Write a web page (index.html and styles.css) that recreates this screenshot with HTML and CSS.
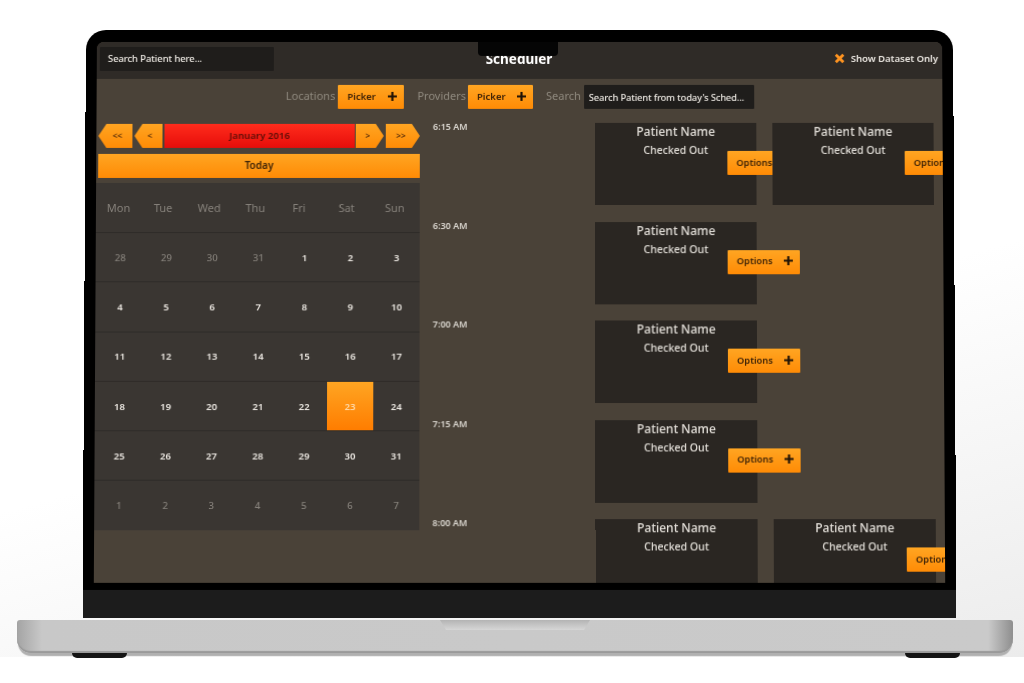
FILE: index.html
```html
<!DOCTYPE html>
<html lang="en">
<head>
<meta charset="utf-8">
<title>Scheduler</title>
<link rel="stylesheet" href="styles.css">
</head>
<body>
<div class="laptop">
  <div class="lid">
    <div class="screen">
      <div class="notch"></div>
      <header class="appbar">
        <div class="appbar-left"><div class="search-box search-main">Search Patient here...</div></div>
        <h1 class="title">Scheduler</h1>
        <div class="dataset">
          <svg class="x-icon" viewBox="0 0 12 12"><path d="M0.8 3 3 0.8 6 3.8 9 0.8 11.2 3 8.2 6 11.2 9 9 11.2 6 8.2 3 11.2 0.8 9 3.8 6Z"/></svg>
          <span>Show Dataset Only</span>
        </div>
      </header>
      <div class="toolbar">
        <span class="tool-label">Locations</span>
        <button class="btn btn-picker btn-loc">Picker <svg class="plus" viewBox="0 0 10 10"><path d="M3.8 0h2.4v3.8H10v2.4H6.2V10H3.8V6.2H0V3.8h3.8Z"/></svg></button>
        <span class="tool-label tool-prov">Providers</span>
        <button class="btn btn-picker btn-prov">Picker <svg class="plus" viewBox="0 0 10 10"><path d="M3.8 0h2.4v3.8H10v2.4H6.2V10H3.8V6.2H0V3.8h3.8Z"/></svg></button>
        <span class="tool-label tool-search">Search</span>
        <div class="search-box search-sched">Search Patient from today's Sched...</div>
      </div>
      <main class="main">
        <section class="cal-col">
          <div class="cal-nav">
            <div class="nav nav-ll">&lt;&lt;</div>
            <div class="nav nav-l">&lt;</div>
            <div class="nav nav-month">January 2016</div>
            <div class="nav nav-r">&gt;</div>
            <div class="nav nav-rr">&gt;&gt;</div>
          </div>
          <div class="today">Today</div>
          <div class="calendar">
            <div class="cal-head"><span>Mon</span><span>Tue</span><span>Wed</span><span>Thu</span><span>Fri</span><span>Sat</span><span>Sun</span></div>
            <div class="cal-row"><span class="off">28</span><span class="off">29</span><span class="off">30</span><span class="off">31</span><span>1</span><span>2</span><span>3</span></div>
            <div class="cal-row"><span>4</span><span>5</span><span>6</span><span>7</span><span>8</span><span>9</span><span>10</span></div>
            <div class="cal-row"><span>11</span><span>12</span><span>13</span><span>14</span><span>15</span><span>16</span><span>17</span></div>
            <div class="cal-row"><span>18</span><span>19</span><span>20</span><span>21</span><span>22</span><span class="sel">23</span><span>24</span></div>
            <div class="cal-row"><span>25</span><span>26</span><span>27</span><span>28</span><span>29</span><span>30</span><span>31</span></div>
            <div class="cal-row"><span class="off">1</span><span class="off">2</span><span class="off">3</span><span class="off">4</span><span class="off">5</span><span class="off">6</span><span class="off">7</span></div>
          </div>
        </section>
        <section class="sched">
          <div class="slot">
            <div class="time">6:15 AM</div>
            <div class="card"><div class="name">Patient Name</div><div class="status">Checked Out</div><button class="btn btn-opt">Options <svg class="plus" viewBox="0 0 10 10"><path d="M3.8 0h2.4v3.8H10v2.4H6.2V10H3.8V6.2H0V3.8h3.8Z"/></svg></button></div>
            <div class="card"><div class="name">Patient Name</div><div class="status">Checked Out</div><button class="btn btn-opt">Options <svg class="plus" viewBox="0 0 10 10"><path d="M3.8 0h2.4v3.8H10v2.4H6.2V10H3.8V6.2H0V3.8h3.8Z"/></svg></button></div>
          </div>
          <div class="slot">
            <div class="time">6:30 AM</div>
            <div class="card"><div class="name">Patient Name</div><div class="status">Checked Out</div><button class="btn btn-opt">Options <svg class="plus" viewBox="0 0 10 10"><path d="M3.8 0h2.4v3.8H10v2.4H6.2V10H3.8V6.2H0V3.8h3.8Z"/></svg></button></div>
          </div>
          <div class="slot">
            <div class="time">7:00 AM</div>
            <div class="card"><div class="name">Patient Name</div><div class="status">Checked Out</div><button class="btn btn-opt">Options <svg class="plus" viewBox="0 0 10 10"><path d="M3.8 0h2.4v3.8H10v2.4H6.2V10H3.8V6.2H0V3.8h3.8Z"/></svg></button></div>
          </div>
          <div class="slot">
            <div class="time">7:15 AM</div>
            <div class="card"><div class="name">Patient Name</div><div class="status">Checked Out</div><button class="btn btn-opt">Options <svg class="plus" viewBox="0 0 10 10"><path d="M3.8 0h2.4v3.8H10v2.4H6.2V10H3.8V6.2H0V3.8h3.8Z"/></svg></button></div>
          </div>
          <div class="slot">
            <div class="time">8:00 AM</div>
            <div class="card"><div class="name">Patient Name</div><div class="status">Checked Out</div></div>
            <div class="card"><div class="name">Patient Name</div><div class="status">Checked Out</div><button class="btn btn-opt">Options <svg class="plus" viewBox="0 0 10 10"><path d="M3.8 0h2.4v3.8H10v2.4H6.2V10H3.8V6.2H0V3.8h3.8Z"/></svg></button></div>
          </div>
        </section>
      </main>
    </div>
    <div class="chin"></div>
  </div>
  <div class="base"><div class="thumb"></div></div>
  <div class="feet"><div class="foot"></div><div class="foot"></div></div>
</div>
</body>
</html>
```

FILE: styles.css
```css
* { box-sizing: border-box; }
html, body { margin: 0; height: 100%; }
body {
  width: 1024px;
  height: 683px;
  overflow: hidden;
  background: linear-gradient(165deg, #ffffff 55%, #ececec 100%) 0 0 / 100% 657px no-repeat #ffffff;
  font-family: "Noto Sans", "Open Sans", sans-serif;
}
.laptop { padding-top: 30px; filter: blur(0.35px); }

.lid {
  width: 867px;
  margin-left: 86px;
  height: 585px;
  background: #000;
  border-radius: 20px 20px 0 0;
  padding-top: 12px;
  display: flex;
  flex-direction: column;
  transform-origin: 50% 0;
  transform: perspective(5000px) rotateX(3.9deg);
}
.screen {
  position: relative;
  margin: 0 11px;
  height: 538px;
  background: #4a4238;
  border-radius: 7px 7px 0 0;
  overflow: hidden;
  color: #e6e2dc;
}
.notch {
  position: absolute;
  left: 381px;
  top: 0;
  width: 80px;
  height: 14px;
  background: #050505;
  border-radius: 0 0 4px 4px;
  z-index: 5;
}
.chin {
  margin-top: 7px;
  height: 28px;
  background: #1c1c1c;
}

.appbar {
  height: 37px;
  background: #2f2b27;
  display: grid;
  grid-template-columns: 1fr auto 1fr;
  align-items: center;
  padding: 0 4px 0 3px;
}
.appbar-left { padding-bottom: 4px; }
.title {
  margin: 0;
  font-size: 13.5px;
  font-weight: 700;
  color: #fff;
  line-height: 1;
  padding-bottom: 1px;
}
.search-box {
  background: #1f1d1b;
  color: #eeeae4;
  font-size: 9.6px;
  font-weight: 500;
  letter-spacing: -0.15px;
  display: flex;
  align-items: center;
  border-radius: 1px;
  white-space: nowrap;
}
.search-main { width: 174px; height: 24px; padding-left: 8px; }
.dataset {
  justify-self: end;
  display: flex;
  align-items: center;
  gap: 6px;
  font-size: 9.5px;
  font-weight: 600;
  color: #ece8e2;
  padding-bottom: 4px;
}
.x-icon { width: 11px; height: 11px; fill: #ff9420; }

.toolbar {
  display: flex;
  align-items: center;
  height: 24px;
  margin-top: 6px;
  padding-left: 189px;
}
.tool-label { font-size: 11px; color: #8f897e; white-space: nowrap; line-height: 1; padding-bottom: 4px; }
.btn {
  border: 0;
  border-radius: 1px;
  background: linear-gradient(#ffa522, #ff8b05);
  font-family: inherit;
  font-size: 9.5px;
  font-weight: 600;
  color: #402407;
  display: flex;
  align-items: center;
  justify-content: space-between;
  height: 24px;
  padding: 0 0 2px;
  white-space: nowrap;
}
.plus { width: 9px; height: 9px; fill: #1f1206; flex: none; }
.btn-picker { width: 66px; padding: 0 7px 2px 9px; margin-left: 3px; }
.btn-prov { width: 65px; margin-left: 2px; }
.tool-prov { margin-left: 13px; }
.tool-search { margin-left: 13px; }
.search-sched { width: 170px; height: 24px; padding-left: 5px; margin-left: 3px; font-size: 9.4px; }

.main { display: flex; margin-top: 14px; }
.cal-col { width: 323px; flex: none; padding-top: 1px; }
.cal-nav { display: flex; height: 24px; margin-left: 2px; font-size: 8.5px; font-weight: 600; color: #5b300a; }
.nav {
  display: flex;
  align-items: center;
  justify-content: center;
  padding-bottom: 2px;
  background: linear-gradient(#ffa522, #ff8b05);
}
.nav-ll { width: 34px; padding-left: 4px; clip-path: polygon(0 50%, 8px 0, 100% 0, 100% 100%, 8px 100%); }
.nav-l { width: 28px; padding-left: 3px; margin-left: 2px; clip-path: polygon(0 50%, 8px 0, 100% 0, 100% 100%, 8px 100%); }
.nav-month {
  width: 190px;
  margin: 0 1px 0 2px;
  background: linear-gradient(#ff2c1c, #e60d0a);
  font-size: 9.6px;
  color: #5c0d06;
}
.nav-r { width: 28px; padding-right: 4px; clip-path: polygon(0 0, calc(100% - 8px) 0, 100% 50%, calc(100% - 8px) 100%, 0 100%); }
.nav-rr { width: 34px; padding-right: 4px; margin-left: 2px; clip-path: polygon(0 0, calc(100% - 8px) 0, 100% 50%, calc(100% - 8px) 100%, 0 100%); }
.today {
  margin: 6px 0 0 2px;
  height: 24px;
  background: linear-gradient(#ffa522, #ff8b05);
  color: #402407;
  font-size: 10px;
  font-weight: 600;
  padding-bottom: 2px;
  display: flex;
  align-items: center;
  justify-content: center;
}
.calendar { margin-top: 5px; background: #3a3632; }
.cal-head {
  height: 49px;
  display: grid;
  grid-template-columns: 45px 44px 48px 44px 43px 52px 44px;
  align-items: center;
  text-align: center;
  font-size: 11px;
  color: #85807a;
}
.cal-row {
  height: 49.3px;
  display: grid;
  grid-template-columns: repeat(7, 1fr);
  border-top: 1px solid #2e2b28;
  padding-left: 1.5px;
  font-size: 9.6px;
  font-weight: 600;
  color: #ece8e2;
}
.cal-row span { display: flex; align-items: center; justify-content: center; }
.cal-row .off { color: #85807a; font-weight: 500; }
.cal-row .sel { background: linear-gradient(#ffa522, #ff7d00); color: #ffd9a8; }

.sched { flex: 1; min-width: 0; padding-left: 13px; }
.slot { display: flex; height: 98.6px; }
.time { width: 162px; flex: none; font-size: 9px; font-weight: 600; color: #dcd8d1; line-height: 8px; }
.card {
  position: relative;
  width: 161px;
  height: 82px;
  margin-right: 16px;
  flex: none;
  background: #2a2622;
  text-align: center;
}
.name { font-size: 12px; font-weight: 500; line-height: 16px; padding-top: 1px; height: 18px; color: #e4e0da; }
.status { font-size: 10.5px; font-weight: 500; line-height: 14px; margin-top: 2px; color: #e4e0da; }
.btn-opt {
  position: absolute;
  left: 132px;
  top: 28px;
  width: 72px;
  padding: 0 7px 2px 9px;
  font-size: 9.3px;
}

.base {
  width: 996px;
  height: 33px;
  margin: 5px 0 0 17px;
  position: relative;
  border-radius: 3px 3px 14px 14px;
  background:
    linear-gradient(to right, #a4a4a4 0, #c8c8c8 2.5%, #cacaca 97.5%, #8e8e8e 100%);
  box-shadow: inset 0 -2px 1px #9a9a9a, 0 4px 1px -1px #b0b0b0;
}
.thumb {
  position: absolute;
  left: 423px;
  top: 0;
  width: 150px;
  height: 10px;
  background: linear-gradient(#b4b4b4, #d6d6d6);
  clip-path: polygon(0 0, 100% 0, 96% 100%, 4% 100%);
}
.feet {
  position: relative;
  display: flex;
  justify-content: space-between;
  padding: 0 64px 0 72px;
}
.foot { width: 55px; height: 5px; background: #141414; border-radius: 0 0 6px 6px; }
```
